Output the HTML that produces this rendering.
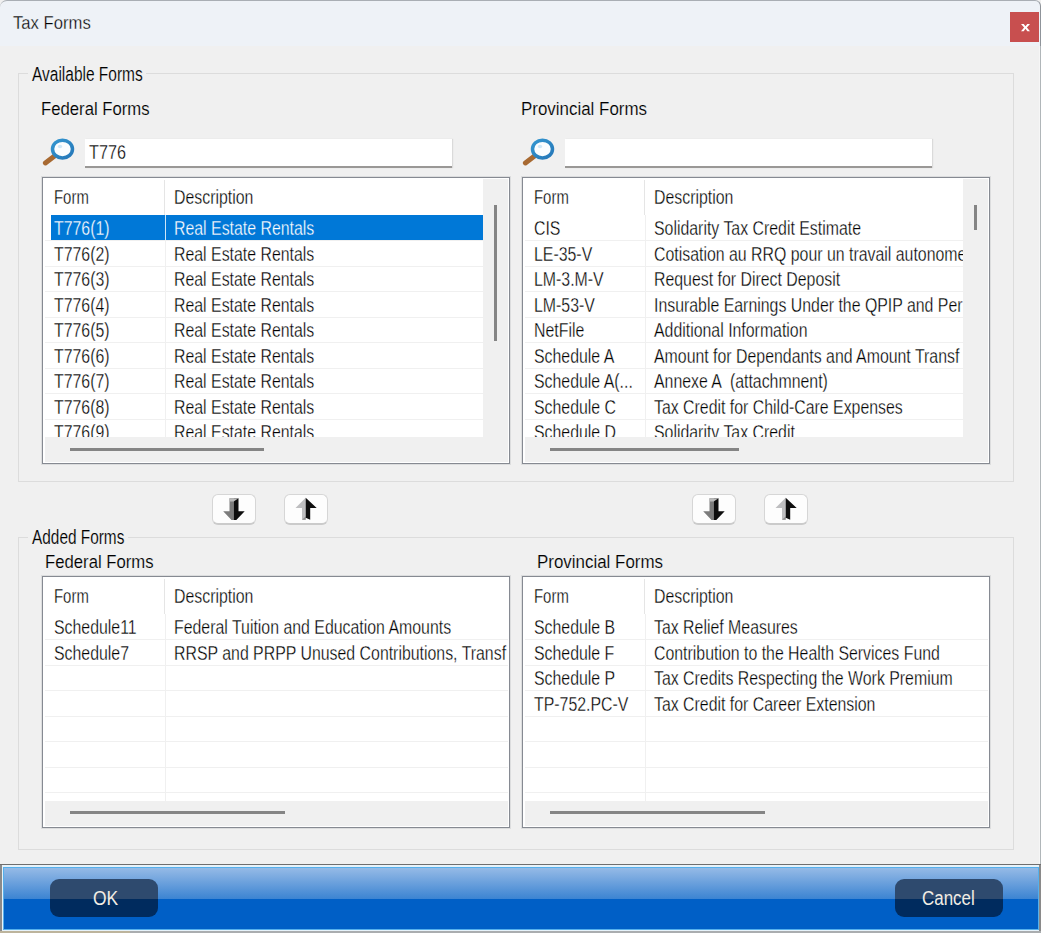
<!DOCTYPE html>
<html><head><meta charset="utf-8"><style>
*{box-sizing:border-box;margin:0;padding:0}
html,body{width:1041px;height:933px;overflow:hidden;background:#F0F0F0;font-family:"Liberation Sans",sans-serif;color:#000}
.a{position:absolute}
.tx{position:absolute;white-space:pre;font-size:18px;line-height:18px;transform-origin:0 0;color:#000}
</style></head><body>
<div class="a" style="left:0px;top:0px;width:1041px;height:46px;background:#EEF2F7;border-top:1px solid #A9AEB4;border-right:1px solid #8F949A;border-top-left-radius:7px;border-top-right-radius:6px"></div>
<div class="tx" style="left:13px;top:14px;transform:scaleX(0.925);font-size:18px;-webkit-text-stroke:0.3px #EEF2F7">Tax Forms</div>
<div class="a" style="left:1039px;top:46px;width:1px;height:818px;background:#F6F6F6"></div>
<div class="a" style="left:1040px;top:46px;width:1px;height:818px;background:#B0B6B9"></div>
<div class="a" style="left:1010px;top:12px;width:29px;height:30px;background:#C84F4F"></div>
<svg class="a" style="left:1020px;top:23px" width="11" height="9" viewBox="0 0 11 9"><polygon points="1,1 3.7,1 5.5,3.3 7.3,1 10,1 6.9,4.5 10,8.2 7.3,8.2 5.5,5.8 3.7,8.2 1,8.2 4.1,4.5" fill="#fff"/></svg>
<div class="a" style="left:18px;top:73px;width:996px;height:409px;border:1px solid #DCDCDC"></div>
<div class="a" style="left:28px;top:71px;width:118px;height:5px;background:#F0F0F0"></div>
<div class="tx" style="left:32px;top:65px;transform:scaleX(0.794);font-size:19.5px;-webkit-text-stroke:0.15px #F0F0F0">Available Forms</div>
<div class="a" style="left:18px;top:537px;width:996px;height:313px;border:1px solid #DCDCDC"></div>
<div class="a" style="left:28px;top:535px;width:100px;height:5px;background:#F0F0F0"></div>
<div class="tx" style="left:32px;top:528px;transform:scaleX(0.789);font-size:19.5px;-webkit-text-stroke:0.15px #F0F0F0">Added Forms</div>
<div class="tx" style="left:41px;top:100px;transform:scaleX(0.928);font-size:18px;-webkit-text-stroke:0.15px #F0F0F0">Federal Forms</div>
<div class="tx" style="left:521px;top:100px;transform:scaleX(0.94);font-size:18px;-webkit-text-stroke:0.15px #F0F0F0">Provincial Forms</div>
<div class="tx" style="left:45px;top:553px;transform:scaleX(0.928);font-size:18px;-webkit-text-stroke:0.15px #F0F0F0">Federal Forms</div>
<div class="tx" style="left:537px;top:553px;transform:scaleX(0.94);font-size:18px;-webkit-text-stroke:0.15px #F0F0F0">Provincial Forms</div>
<svg class="a" style="left:40px;top:136px" width="40" height="32" viewBox="0 0 40 32"><line x1="5.4" y1="26.9" x2="15.5" y2="19.3" stroke="#A86A32" stroke-width="5" stroke-linecap="round"/><defs><linearGradient id="rg40" x1="0" y1="0" x2="1" y2="1"><stop offset="0" stop-color="#3396D0"/><stop offset="1" stop-color="#2577B8"/></linearGradient></defs><ellipse cx="22.5" cy="13.1" rx="10" ry="8.9" fill="#FAFDFF" stroke="url(#rg40)" stroke-width="3.5"/><ellipse cx="20" cy="10.5" rx="2.2" ry="1.8" fill="#CFE8F8"/></svg>
<div class="a" style="left:85px;top:139px;width:367px;height:29px;background:#fff;border-bottom:2px solid #9A9896;box-shadow:1px 0 1px #DADADA"></div>
<svg class="a" style="left:520px;top:136px" width="40" height="32" viewBox="0 0 40 32"><line x1="5.4" y1="26.9" x2="15.5" y2="19.3" stroke="#A86A32" stroke-width="5" stroke-linecap="round"/><defs><linearGradient id="rg520" x1="0" y1="0" x2="1" y2="1"><stop offset="0" stop-color="#3396D0"/><stop offset="1" stop-color="#2577B8"/></linearGradient></defs><ellipse cx="22.5" cy="13.1" rx="10" ry="8.9" fill="#FAFDFF" stroke="url(#rg520)" stroke-width="3.5"/><ellipse cx="20" cy="10.5" rx="2.2" ry="1.8" fill="#CFE8F8"/></svg>
<div class="a" style="left:565px;top:139px;width:367px;height:29px;background:#fff;border-bottom:2px solid #9A9896;box-shadow:1px 0 1px #DADADA"></div>
<div class="tx" style="left:89px;top:143px;transform:scaleX(0.831);font-size:19.5px;-webkit-text-stroke:0.3px #fff">T776</div>
<div class="a" style="left:42px;top:177px;width:468px;height:287px;border:1px solid #868A92;background:#fff;overflow:hidden;box-shadow:0 0 0 1px rgba(134,138,146,0.18)">
<div class="a" style="left:2px;top:259px;width:463px;height:25px;background:#F0F0F0"></div>
<div class="a" style="left:440px;top:1px;width:25px;height:283px;background:#F0F0F0"></div>
<div class="a" style="left:1px;top:1px;width:439px;height:258px;overflow:hidden">
<div class="a" style="left:120px;top:1px;width:1px;height:35px;background:#E5E5E5"></div>
<div class="tx" style="left:10px;top:9px;transform:scaleX(0.765);font-size:19.5px;-webkit-text-stroke:0.3px #fff">Form</div>
<div class="tx" style="left:130px;top:9px;transform:scaleX(0.814);font-size:19.5px;-webkit-text-stroke:0.3px #fff">Description</div>
<div class="a" style="left:1px;top:61px;width:438px;height:1px;background:#F0F0F0"></div>
<div class="a" style="left:1px;top:87px;width:438px;height:1px;background:#F0F0F0"></div>
<div class="a" style="left:1px;top:112px;width:438px;height:1px;background:#F0F0F0"></div>
<div class="a" style="left:1px;top:138px;width:438px;height:1px;background:#F0F0F0"></div>
<div class="a" style="left:1px;top:163px;width:438px;height:1px;background:#F0F0F0"></div>
<div class="a" style="left:1px;top:189px;width:438px;height:1px;background:#F0F0F0"></div>
<div class="a" style="left:1px;top:214px;width:438px;height:1px;background:#F0F0F0"></div>
<div class="a" style="left:1px;top:240px;width:438px;height:1px;background:#F0F0F0"></div>
<div class="a" style="left:121px;top:36px;width:1px;height:400px;background:#F0F0F0"></div>
<div class="a" style="left:7px;top:36px;width:114px;height:25px;background:#0078D7"></div>
<div class="a" style="left:122px;top:36px;width:317px;height:25px;background:#0078D7"></div>
<div class="a" style="left:121px;top:36px;width:1px;height:25px;background:#CDE6F7"></div>
<div class="tx" style="left:10px;top:40px;transform:scaleX(0.814);font-size:19.5px;-webkit-text-stroke:0.3px #0078D7;color:#fff">T776(1)</div>
<div class="tx" style="left:130px;top:40px;transform:scaleX(0.814);font-size:19.5px;-webkit-text-stroke:0.3px #0078D7;color:#fff">Real Estate Rentals</div>
<div class="tx" style="left:10px;top:66px;transform:scaleX(0.814);font-size:19.5px;-webkit-text-stroke:0.3px #fff">T776(2)</div>
<div class="tx" style="left:130px;top:66px;transform:scaleX(0.814);font-size:19.5px;-webkit-text-stroke:0.3px #fff">Real Estate Rentals</div>
<div class="tx" style="left:10px;top:91px;transform:scaleX(0.814);font-size:19.5px;-webkit-text-stroke:0.3px #fff">T776(3)</div>
<div class="tx" style="left:130px;top:91px;transform:scaleX(0.814);font-size:19.5px;-webkit-text-stroke:0.3px #fff">Real Estate Rentals</div>
<div class="tx" style="left:10px;top:117px;transform:scaleX(0.814);font-size:19.5px;-webkit-text-stroke:0.3px #fff">T776(4)</div>
<div class="tx" style="left:130px;top:117px;transform:scaleX(0.814);font-size:19.5px;-webkit-text-stroke:0.3px #fff">Real Estate Rentals</div>
<div class="tx" style="left:10px;top:142px;transform:scaleX(0.814);font-size:19.5px;-webkit-text-stroke:0.3px #fff">T776(5)</div>
<div class="tx" style="left:130px;top:142px;transform:scaleX(0.814);font-size:19.5px;-webkit-text-stroke:0.3px #fff">Real Estate Rentals</div>
<div class="tx" style="left:10px;top:168px;transform:scaleX(0.814);font-size:19.5px;-webkit-text-stroke:0.3px #fff">T776(6)</div>
<div class="tx" style="left:130px;top:168px;transform:scaleX(0.814);font-size:19.5px;-webkit-text-stroke:0.3px #fff">Real Estate Rentals</div>
<div class="tx" style="left:10px;top:193px;transform:scaleX(0.814);font-size:19.5px;-webkit-text-stroke:0.3px #fff">T776(7)</div>
<div class="tx" style="left:130px;top:193px;transform:scaleX(0.814);font-size:19.5px;-webkit-text-stroke:0.3px #fff">Real Estate Rentals</div>
<div class="tx" style="left:10px;top:219px;transform:scaleX(0.814);font-size:19.5px;-webkit-text-stroke:0.3px #fff">T776(8)</div>
<div class="tx" style="left:130px;top:219px;transform:scaleX(0.814);font-size:19.5px;-webkit-text-stroke:0.3px #fff">Real Estate Rentals</div>
<div class="tx" style="left:10px;top:244px;transform:scaleX(0.814);font-size:19.5px;-webkit-text-stroke:0.3px #fff">T776(9)</div>
<div class="tx" style="left:130px;top:244px;transform:scaleX(0.814);font-size:19.5px;-webkit-text-stroke:0.3px #fff">Real Estate Rentals</div>
</div>
<div class="a" style="left:451px;top:27px;width:3px;height:136px;background:#858585"></div>
<div class="a" style="left:27px;top:270px;width:194px;height:3px;background:#858585"></div>
</div>
<div class="a" style="left:522px;top:177px;width:468px;height:287px;border:1px solid #868A92;background:#fff;overflow:hidden;box-shadow:0 0 0 1px rgba(134,138,146,0.18)">
<div class="a" style="left:2px;top:259px;width:463px;height:25px;background:#F0F0F0"></div>
<div class="a" style="left:440px;top:1px;width:25px;height:283px;background:#F0F0F0"></div>
<div class="a" style="left:1px;top:1px;width:439px;height:258px;overflow:hidden">
<div class="a" style="left:120px;top:1px;width:1px;height:35px;background:#E5E5E5"></div>
<div class="tx" style="left:10px;top:9px;transform:scaleX(0.765);font-size:19.5px;-webkit-text-stroke:0.3px #fff">Form</div>
<div class="tx" style="left:130px;top:9px;transform:scaleX(0.814);font-size:19.5px;-webkit-text-stroke:0.3px #fff">Description</div>
<div class="a" style="left:1px;top:61px;width:438px;height:1px;background:#F0F0F0"></div>
<div class="a" style="left:1px;top:87px;width:438px;height:1px;background:#F0F0F0"></div>
<div class="a" style="left:1px;top:112px;width:438px;height:1px;background:#F0F0F0"></div>
<div class="a" style="left:1px;top:138px;width:438px;height:1px;background:#F0F0F0"></div>
<div class="a" style="left:1px;top:163px;width:438px;height:1px;background:#F0F0F0"></div>
<div class="a" style="left:1px;top:189px;width:438px;height:1px;background:#F0F0F0"></div>
<div class="a" style="left:1px;top:214px;width:438px;height:1px;background:#F0F0F0"></div>
<div class="a" style="left:1px;top:240px;width:438px;height:1px;background:#F0F0F0"></div>
<div class="a" style="left:121px;top:36px;width:1px;height:400px;background:#F0F0F0"></div>
<div class="tx" style="left:10px;top:40px;transform:scaleX(0.814);font-size:19.5px;-webkit-text-stroke:0.3px #fff">CIS</div>
<div class="tx" style="left:130px;top:40px;transform:scaleX(0.814);font-size:19.5px;-webkit-text-stroke:0.3px #fff">Solidarity Tax Credit Estimate</div>
<div class="tx" style="left:10px;top:66px;transform:scaleX(0.814);font-size:19.5px;-webkit-text-stroke:0.3px #fff">LE-35-V</div>
<div class="tx" style="left:130px;top:66px;transform:scaleX(0.814);font-size:19.5px;-webkit-text-stroke:0.3px #fff">Cotisation au RRQ pour un travail autonome</div>
<div class="tx" style="left:10px;top:91px;transform:scaleX(0.814);font-size:19.5px;-webkit-text-stroke:0.3px #fff">LM-3.M-V</div>
<div class="tx" style="left:130px;top:91px;transform:scaleX(0.814);font-size:19.5px;-webkit-text-stroke:0.3px #fff">Request for Direct Deposit</div>
<div class="tx" style="left:10px;top:117px;transform:scaleX(0.814);font-size:19.5px;-webkit-text-stroke:0.3px #fff">LM-53-V</div>
<div class="tx" style="left:130px;top:117px;transform:scaleX(0.814);font-size:19.5px;-webkit-text-stroke:0.3px #fff">Insurable Earnings Under the QPIP and Per</div>
<div class="tx" style="left:10px;top:142px;transform:scaleX(0.814);font-size:19.5px;-webkit-text-stroke:0.3px #fff">NetFile</div>
<div class="tx" style="left:130px;top:142px;transform:scaleX(0.814);font-size:19.5px;-webkit-text-stroke:0.3px #fff">Additional Information</div>
<div class="tx" style="left:10px;top:168px;transform:scaleX(0.814);font-size:19.5px;-webkit-text-stroke:0.3px #fff">Schedule A</div>
<div class="tx" style="left:130px;top:168px;transform:scaleX(0.814);font-size:19.5px;-webkit-text-stroke:0.3px #fff">Amount for Dependants and Amount Transf</div>
<div class="tx" style="left:10px;top:193px;transform:scaleX(0.814);font-size:19.5px;-webkit-text-stroke:0.3px #fff">Schedule A(...</div>
<div class="tx" style="left:130px;top:193px;transform:scaleX(0.814);font-size:19.5px;-webkit-text-stroke:0.3px #fff">Annexe A  (attachmnent)</div>
<div class="tx" style="left:10px;top:219px;transform:scaleX(0.814);font-size:19.5px;-webkit-text-stroke:0.3px #fff">Schedule C</div>
<div class="tx" style="left:130px;top:219px;transform:scaleX(0.814);font-size:19.5px;-webkit-text-stroke:0.3px #fff">Tax Credit for Child-Care Expenses</div>
<div class="tx" style="left:10px;top:244px;transform:scaleX(0.814);font-size:19.5px;-webkit-text-stroke:0.3px #fff">Schedule D</div>
<div class="tx" style="left:130px;top:244px;transform:scaleX(0.814);font-size:19.5px;-webkit-text-stroke:0.3px #fff">Solidarity Tax Credit</div>
</div>
<div class="a" style="left:451px;top:27px;width:3px;height:25px;background:#858585"></div>
<div class="a" style="left:27px;top:270px;width:189px;height:3px;background:#858585"></div>
</div>
<div class="a" style="left:42px;top:576px;width:468px;height:252px;border:1px solid #868A92;background:#fff;overflow:hidden;box-shadow:0 0 0 1px rgba(134,138,146,0.18)">
<div class="a" style="left:2px;top:224px;width:463px;height:25px;background:#F0F0F0"></div>
<div class="a" style="left:1px;top:1px;width:464px;height:223px;overflow:hidden">
<div class="a" style="left:120px;top:1px;width:1px;height:35px;background:#E5E5E5"></div>
<div class="tx" style="left:10px;top:9px;transform:scaleX(0.765);font-size:19.5px;-webkit-text-stroke:0.3px #fff">Form</div>
<div class="tx" style="left:130px;top:9px;transform:scaleX(0.814);font-size:19.5px;-webkit-text-stroke:0.3px #fff">Description</div>
<div class="a" style="left:1px;top:61px;width:463px;height:1px;background:#F0F0F0"></div>
<div class="a" style="left:1px;top:87px;width:463px;height:1px;background:#F0F0F0"></div>
<div class="a" style="left:1px;top:112px;width:463px;height:1px;background:#F0F0F0"></div>
<div class="a" style="left:1px;top:138px;width:463px;height:1px;background:#F0F0F0"></div>
<div class="a" style="left:1px;top:163px;width:463px;height:1px;background:#F0F0F0"></div>
<div class="a" style="left:1px;top:189px;width:463px;height:1px;background:#F0F0F0"></div>
<div class="a" style="left:1px;top:214px;width:463px;height:1px;background:#F0F0F0"></div>
<div class="a" style="left:121px;top:36px;width:1px;height:400px;background:#F0F0F0"></div>
<div class="tx" style="left:10px;top:40px;transform:scaleX(0.814);font-size:19.5px;-webkit-text-stroke:0.3px #fff">Schedule11</div>
<div class="tx" style="left:130px;top:40px;transform:scaleX(0.814);font-size:19.5px;-webkit-text-stroke:0.3px #fff">Federal Tuition and Education Amounts</div>
<div class="tx" style="left:10px;top:66px;transform:scaleX(0.814);font-size:19.5px;-webkit-text-stroke:0.3px #fff">Schedule7</div>
<div class="tx" style="left:130px;top:66px;transform:scaleX(0.814);font-size:19.5px;-webkit-text-stroke:0.3px #fff">RRSP and PRPP Unused Contributions, Transf</div>
</div>
<div class="a" style="left:27px;top:234px;width:215px;height:3px;background:#858585"></div>
</div>
<div class="a" style="left:522px;top:576px;width:468px;height:252px;border:1px solid #868A92;background:#fff;overflow:hidden;box-shadow:0 0 0 1px rgba(134,138,146,0.18)">
<div class="a" style="left:2px;top:224px;width:463px;height:25px;background:#F0F0F0"></div>
<div class="a" style="left:1px;top:1px;width:464px;height:223px;overflow:hidden">
<div class="a" style="left:120px;top:1px;width:1px;height:35px;background:#E5E5E5"></div>
<div class="tx" style="left:10px;top:9px;transform:scaleX(0.765);font-size:19.5px;-webkit-text-stroke:0.3px #fff">Form</div>
<div class="tx" style="left:130px;top:9px;transform:scaleX(0.814);font-size:19.5px;-webkit-text-stroke:0.3px #fff">Description</div>
<div class="a" style="left:1px;top:61px;width:463px;height:1px;background:#F0F0F0"></div>
<div class="a" style="left:1px;top:87px;width:463px;height:1px;background:#F0F0F0"></div>
<div class="a" style="left:1px;top:112px;width:463px;height:1px;background:#F0F0F0"></div>
<div class="a" style="left:1px;top:138px;width:463px;height:1px;background:#F0F0F0"></div>
<div class="a" style="left:1px;top:163px;width:463px;height:1px;background:#F0F0F0"></div>
<div class="a" style="left:1px;top:189px;width:463px;height:1px;background:#F0F0F0"></div>
<div class="a" style="left:1px;top:214px;width:463px;height:1px;background:#F0F0F0"></div>
<div class="a" style="left:121px;top:36px;width:1px;height:400px;background:#F0F0F0"></div>
<div class="tx" style="left:10px;top:40px;transform:scaleX(0.814);font-size:19.5px;-webkit-text-stroke:0.3px #fff">Schedule B</div>
<div class="tx" style="left:130px;top:40px;transform:scaleX(0.814);font-size:19.5px;-webkit-text-stroke:0.3px #fff">Tax Relief Measures</div>
<div class="tx" style="left:10px;top:66px;transform:scaleX(0.814);font-size:19.5px;-webkit-text-stroke:0.3px #fff">Schedule F</div>
<div class="tx" style="left:130px;top:66px;transform:scaleX(0.814);font-size:19.5px;-webkit-text-stroke:0.3px #fff">Contribution to the Health Services Fund</div>
<div class="tx" style="left:10px;top:91px;transform:scaleX(0.814);font-size:19.5px;-webkit-text-stroke:0.3px #fff">Schedule P</div>
<div class="tx" style="left:130px;top:91px;transform:scaleX(0.814);font-size:19.5px;-webkit-text-stroke:0.3px #fff">Tax Credits Respecting the Work Premium</div>
<div class="tx" style="left:10px;top:117px;transform:scaleX(0.814);font-size:19.5px;-webkit-text-stroke:0.3px #fff">TP-752.PC-V</div>
<div class="tx" style="left:130px;top:117px;transform:scaleX(0.814);font-size:19.5px;-webkit-text-stroke:0.3px #fff">Tax Credit for Career Extension</div>
</div>
<div class="a" style="left:27px;top:234px;width:215px;height:3px;background:#858585"></div>
</div>
<div class="a" style="left:212px;top:494px;width:44px;height:31px;background:#FDFDFD;border:1px solid #D6D6D6;border-bottom:2px solid #CBCBCB;border-radius:6px"></div>
<div class="a" style="left:284px;top:494px;width:44px;height:31px;background:#FDFDFD;border:1px solid #D6D6D6;border-bottom:2px solid #CBCBCB;border-radius:6px"></div>
<svg class="a" style="left:212px;top:493px" width="44" height="32" viewBox="0 0 44 32"><polygon points="17.5,5.2 21.7,5.2 21.7,27 19.5,27 11.2,18.2 17.5,18.2" fill="#7C7C7C"/><polygon points="21.7,5.2 26.5,5.2 26.5,18.2 32.7,18.2 24.3,27 21.7,27" fill="#0E0E0E"/><polygon points="17.5,5.2 26.5,5.2 21.7,8.6 17.5,8.6" fill="#B9B9B9"/></svg>
<svg class="a" style="left:284px;top:493px" width="44" height="32" viewBox="0 0 44 32"><polygon points="21.7,4.7 11.5,14.9 18,14.9 18,26.7 21.7,26.7" fill="#BEBEC0"/><polygon points="18,26.7 21.7,26.7 21.7,23.5" fill="#8E8E8E"/><polygon points="21.7,4.7 32.7,15.1 26.2,15.1 26.2,26.7 21.7,24.8" fill="#0E0E0E"/></svg>
<div class="a" style="left:692px;top:494px;width:44px;height:31px;background:#FDFDFD;border:1px solid #D6D6D6;border-bottom:2px solid #CBCBCB;border-radius:6px"></div>
<div class="a" style="left:764px;top:494px;width:44px;height:31px;background:#FDFDFD;border:1px solid #D6D6D6;border-bottom:2px solid #CBCBCB;border-radius:6px"></div>
<svg class="a" style="left:692px;top:493px" width="44" height="32" viewBox="0 0 44 32"><polygon points="17.5,5.2 21.7,5.2 21.7,27 19.5,27 11.2,18.2 17.5,18.2" fill="#7C7C7C"/><polygon points="21.7,5.2 26.5,5.2 26.5,18.2 32.7,18.2 24.3,27 21.7,27" fill="#0E0E0E"/><polygon points="17.5,5.2 26.5,5.2 21.7,8.6 17.5,8.6" fill="#B9B9B9"/></svg>
<svg class="a" style="left:764px;top:493px" width="44" height="32" viewBox="0 0 44 32"><polygon points="21.7,4.7 11.5,14.9 18,14.9 18,26.7 21.7,26.7" fill="#BEBEC0"/><polygon points="18,26.7 21.7,26.7 21.7,23.5" fill="#8E8E8E"/><polygon points="21.7,4.7 32.7,15.1 26.2,15.1 26.2,26.7 21.7,24.8" fill="#0E0E0E"/></svg>
<div class="a" style="left:0;top:864px;width:1041px;height:69px;background:#8A8A8A"></div>
<div class="a" style="left:0;top:864px;width:1041px;height:1px;background:#6E6E6E"></div>
<div class="a" style="left:2px;top:865px;width:1037px;height:66px;background:#E6F2FA"></div>
<div class="a" style="left:3px;top:867px;width:1036px;height:63px;background:#55B0EC"></div>
<div class="a" style="left:4px;top:868px;width:1034px;height:61px;background:linear-gradient(#95BAE6 0px,#3C84D2 31px,#005FC6 31px,#005FC6 100%)"></div>
<div class="a" style="left:50px;top:879px;width:108px;height:38px;border-radius:9px;background:linear-gradient(#2E4A6E 0,#2E4A6E 20px,#002B5E 20px,#002B5E 100%)"></div>
<div class="tx" style="left:93px;top:889px;transform:scaleX(0.895);font-size:19.5px;-webkit-text-stroke:0.3px transparent;color:#F2EDE4">OK</div>
<div class="a" style="left:895px;top:879px;width:108px;height:38px;border-radius:9px;background:linear-gradient(#2E4A6E 0,#2E4A6E 20px,#002B5E 20px,#002B5E 100%)"></div>
<div class="tx" style="left:922px;top:889px;transform:scaleX(0.868);font-size:19.5px;-webkit-text-stroke:0.3px transparent;color:#F2EDE4">Cancel</div>
<div class="a" style="left:0px;top:931px;width:1041px;height:2px;background:#AAADAF"></div>
<div class="a" style="left:0px;top:931px;width:130px;height:2px;background:#BDB49C"></div>
</body></html>
